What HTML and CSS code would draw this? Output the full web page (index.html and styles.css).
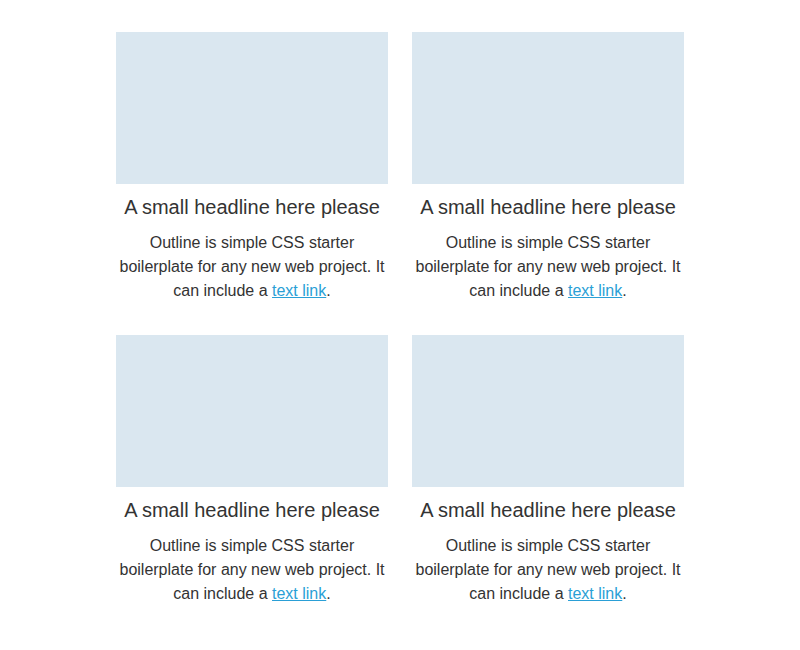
FILE: index.html
```html
<!DOCTYPE html>
<html>
<head>
<meta charset="utf-8">
<link rel="stylesheet" href="styles.css">
</head>
<body>
<div class="grid">
  <div class="card">
    <div class="media"></div>
    <h3 class="title">A small headline here please</h3>
    <p class="text">Outline is simple CSS starter boilerplate for any new web project. It can include a <a href="#">text link</a>.</p>
  </div>
  <div class="card">
    <div class="media"></div>
    <h3 class="title">A small headline here please</h3>
    <p class="text">Outline is simple CSS starter boilerplate for any new web project. It can include a <a href="#">text link</a>.</p>
  </div>
  <div class="card">
    <div class="media"></div>
    <h3 class="title">A small headline here please</h3>
    <p class="text">Outline is simple CSS starter boilerplate for any new web project. It can include a <a href="#">text link</a>.</p>
  </div>
  <div class="card">
    <div class="media"></div>
    <h3 class="title">A small headline here please</h3>
    <p class="text">Outline is simple CSS starter boilerplate for any new web project. It can include a <a href="#">text link</a>.</p>
  </div>
</div>
</body>
</html>
```

FILE: styles.css
```css
html, body {
  margin: 0;
  padding: 0;
  background: #ffffff;
}
body {
  font-family: "Liberation Sans", Arial, Helvetica, sans-serif;
  color: #333333;
}
.grid {
  width: 568px;
  margin: 32px auto 0;
  display: grid;
  grid-template-columns: 272px 272px;
  column-gap: 24px;
  row-gap: 32px;
}
.card {
  text-align: center;
}
.media {
  height: 152px;
  background: #dae7f0;
}
.title {
  margin: 11px 0 0;
  font-size: 20px;
  line-height: 24px;
  font-weight: normal;
  color: #333333;
}
.text {
  margin: 12px 0 0;
  font-size: 16px;
  line-height: 24px;
}
.text a {
  color: #2a9fd6;
  text-decoration: underline;
}
```
